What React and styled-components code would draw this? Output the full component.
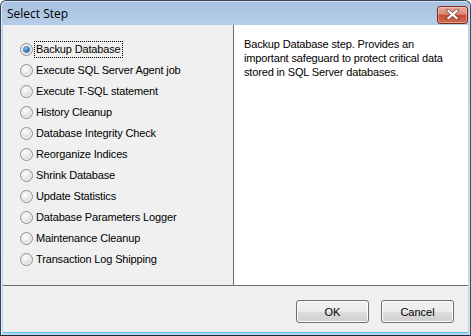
import React, { useState } from "react";
import styled, { createGlobalStyle } from "styled-components";

const Global = createGlobalStyle`
  html, body { margin: 0; padding: 0; background: #ffffff; }
  body { width: 471px; height: 336px; overflow: hidden; }
`;

const uiFont = `Tahoma, "Liberation Sans", Arial, sans-serif`;

const Window = styled.div`
  box-sizing: border-box;
  width: 471px;
  height: 336px;
  border: 1px solid #3a4658;
  border-bottom-color: #1c2a3a;
  border-radius: 6px 6px 0 0;
  background: linear-gradient(180deg, #a7c1de 0px, #b5cde8 22px, #bed4eb 100%);
  display: flex;
  flex-direction: column;
  overflow: hidden;
  box-shadow: inset 1px 1px 0 rgba(255,255,255,0.55), inset -1px 0 0 rgba(255,255,255,0.4);
`;

const TitleBar = styled.div`
  height: 24px;
  flex: none;
  display: flex;
  align-items: center;
  justify-content: space-between;
  padding: 0 2px 0 6px;
`;

const Title = styled.span`
  font-family: "Segoe UI", "Open Sans", "Noto Sans", sans-serif;
  font-size: 12px;
  color: #000000;
  margin-top: 1px;
`;

const CloseButton = styled.div`
  box-sizing: border-box;
  width: 31px;
  height: 18px;
  margin-top: 3px;
  border: 1px solid #7a2a1e;
  border-radius: 3px;
  background: linear-gradient(180deg, #e9a99a 0%, #dd8a77 45%, #c94c31 50%, #d06a52 100%);
  box-shadow: inset 0 0 0 1px rgba(255,255,255,0.35);
  display: flex;
  align-items: center;
  justify-content: center;
`;

const Body = styled.div`
  box-sizing: border-box;
  flex: 1;
  margin: 0 2px 2px 2px;
  background: #f0f0f0;
  display: flex;
  flex-direction: column;
  border-bottom: 1px solid #4fc4ea;
`;

const Panels = styled.div`
  display: flex;
  height: 260px;
  flex: none;
  border-bottom: 1px solid #6e6e6e;
`;

const LeftPanel = styled.div`
  box-sizing: border-box;
  width: 231px;
  flex: none;
  border-right: 1px solid #6e6e6e;
  background: #f0f0f0;
  padding: 14px 0 0 17px;
  display: flex;
  flex-direction: column;
`;

const RightPanel = styled.div`
  flex: 1;
  background: #ffffff;
  padding: 12px 8px 0 10px;
  font-family: ${uiFont};
  font-size: 11px;
  letter-spacing: -0.15px;
  line-height: 14px;
  color: #000000;
`;

const Row = styled.label`
  height: 21px;
  display: flex;
  align-items: center;
  gap: 1px;
  cursor: default;
`;

const RadioCircle = styled.span`
  box-sizing: border-box;
  width: 13px;
  height: 13px;
  border-radius: 50%;
  border: 1px solid #8f8f8f;
  background: radial-gradient(circle at 40% 35%, #ffffff 0%, #e6e6e6 45%, #cfcfcf 100%);
  display: flex;
  align-items: center;
  justify-content: center;
  flex: none;
  box-shadow: inset 0 0 0 1px #f4f4f4;
`;

const RadioDot = styled.span`
  width: 5px;
  height: 5px;
  border-radius: 50%;
  background: radial-gradient(circle at 40% 35%, #8ad0ff 0%, #1a6cb6 60%, #0d4f8c 100%);
  box-shadow: 0 0 0 1px #5b8fbf;
`;

const RowLabel = styled.span`
  font-family: ${uiFont};
  font-size: 11px;
  letter-spacing: -0.15px;
  color: #000000;
  padding: 1px 1px 2px 1px;
  border: 1px dotted ${(p) => (p.$focused ? "#000000" : "transparent")};
  line-height: 12px;
`;

const Footer = styled.div`
  flex: 1;
  display: flex;
  justify-content: flex-end;
  align-items: flex-start;
  gap: 12px;
  padding: 14px 14px 0 0;
`;

const Button = styled.button`
  box-sizing: border-box;
  width: 73px;
  height: 23px;
  border: 1px solid #707070;
  border-radius: 3px;
  background: linear-gradient(180deg, #f2f2f2 0%, #ebebeb 50%, #dddddd 51%, #cfcfcf 100%);
  box-shadow: inset 0 0 0 1px #fcfcfc;
  font-family: ${uiFont};
  font-size: 11px;
  color: #000000;
  padding: 0;
`;

const steps = [
  "Backup Database",
  "Execute SQL Server Agent job",
  "Execute T-SQL statement",
  "History Cleanup",
  "Database Integrity Check",
  "Reorganize Indices",
  "Shrink Database",
  "Update Statistics",
  "Database Parameters Logger",
  "Maintenance Cleanup",
  "Transaction Log Shipping",
];

export default function App() {
  const [selected, setSelected] = useState(0);
  return (
    <>
      <Global />
      <Window>
        <TitleBar>
          <Title>Select Step</Title>
          <CloseButton>
            <svg width="13" height="11" viewBox="0 0 13 11">
              <path
                d="M2 1.5 L6.5 5.5 L11 1.5 M2 9.5 L6.5 5.5 L11 9.5"
                stroke="#5a3a34"
                strokeWidth="4"
                strokeLinecap="square"
                fill="none"
                opacity="0.55"
              />
              <path
                d="M2.5 2 L6.5 5.5 L10.5 2 M2.5 9 L6.5 5.5 L10.5 9"
                stroke="#ffffff"
                strokeWidth="2.2"
                strokeLinecap="square"
                fill="none"
              />
            </svg>
          </CloseButton>
        </TitleBar>
        <Body>
          <Panels>
            <LeftPanel>
              {steps.map((s, i) => (
                <Row key={s} onClick={() => setSelected(i)}>
                  <RadioCircle>{selected === i && <RadioDot />}</RadioCircle>
                  <RowLabel $focused={selected === i}>{s}</RowLabel>
                </Row>
              ))}
            </LeftPanel>
            <RightPanel>
              Backup Database step. Provides an
              <br />
              important safeguard to protect critical data
              <br />
              stored in SQL Server databases.
            </RightPanel>
          </Panels>
          <Footer>
            <Button>OK</Button>
            <Button>Cancel</Button>
          </Footer>
        </Body>
      </Window>
    </>
  );
}
